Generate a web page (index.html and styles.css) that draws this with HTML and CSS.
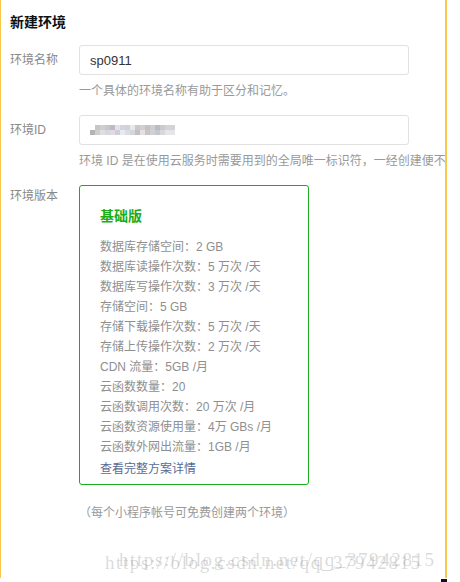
FILE: index.html
```html
<!DOCTYPE html>
<html lang="zh-CN">
<head>
  <meta charset="UTF-8">
  <title>新建环境</title>
  <link rel="stylesheet" href="styles.css">
</head>
<body>
  <div class="panel">
    <h1>新建环境</h1>

    <!-- 环境名称 -->
    <div class="field">
      <label class="label">环境名称</label>
      <input class="input" type="text" value="sp0911">
      <p class="hint">一个具体的环境名称有助于区分和记忆。</p>
    </div>

    <!-- 环境ID -->
    <div class="field">
      <label class="label">环境ID</label>
      <div class="input id-box"><span class="mosaic"></span></div>
      <p class="hint">环境 ID 是在使用云服务时需要用到的全局唯一标识符，一经创建便不</p>
    </div>

    <!-- 环境版本 -->
    <div class="field">
      <label class="label label-top">环境版本</label>
      <div class="plan">
        <h2>基础版</h2>
        <ul>
          <li>数据库存储空间：2 GB</li>
          <li>数据库读操作次数：5 万次 /天</li>
          <li>数据库写操作次数：3 万次 /天</li>
          <li>存储空间：5 GB</li>
          <li>存储下载操作次数：5 万次 /天</li>
          <li>存储上传操作次数：2 万次 /天</li>
          <li>CDN 流量：5GB /月</li>
          <li>云函数数量：20</li>
          <li>云函数调用次数：20 万次 /月</li>
          <li>云函数资源使用量：4万 GBs /月</li>
          <li>云函数外网出流量：1GB /月</li>
        </ul>
        <a class="more" href="#">查看完整方案详情</a>
      </div>
      <p class="note">（每个小程序帐号可免费创建两个环境）</p>
    </div>

    <div class="watermark">https://blog.csdn.net/qq_37942815</div>
  </div>
  <div class="corner"></div>
</body>
</html>
```

FILE: styles.css
```css
body {
  margin: 0;
  background: #fff;
  font-family: "Liberation Sans", "Noto Sans CJK SC", sans-serif;
  font-size: 12px;
  color: #333;
}
.panel {
  position: relative;
  width: 435px;
  height: 578px;
  padding-left: 9px;
  border-left: 1px solid #f8c94c;
  border-right: 2px solid #f8c94c;
  overflow: hidden;
}
h1 {
  margin: 0;
  padding-top: 12px;
  font-size: 14px;
  line-height: 20px;
  font-weight: bold;
  color: #111;
}
.field {
  display: grid;
  grid-template-columns: 69px 330px;
  margin-top: 15px;
}
.field:first-of-type {
  margin-top: 13px;
}
.label {
  color: #888;
  line-height: 30px;
}
.label-top {
  line-height: 22px;
}
.input {
  box-sizing: border-box;
  width: 330px;
  height: 30px;
  padding: 0 10px;
  border: 1px solid #e1e1e1;
  border-radius: 3px;
  font-family: inherit;
  font-size: 13px;
  color: #333;
  outline: none;
}
.id-box {
  display: flex;
  align-items: center;
}
/* 打码的环境ID */
.mosaic {
  display: block;
  width: 85px;
  height: 10px;
  background-image:
    linear-gradient(90deg, #fff 0 5px, #c9c6c9 5px 10px, #cfcfcf 10px 15px, #c5c7cf 15px 20px, #b9bcc6 20px 25px, #e2e2e8 25px 30px, #d7d3dd 30px 35px, #cdd2df 35px 40px, #e8e8ea 40px 45px, #c9c9cb 45px 50px, #d1cfd2 50px 55px, #c4c2c6 55px 60px, #cfcdd0 60px 65px, #b9bbc6 65px 70px, #cacbd0 70px 75px, #d4d4d6 75px 85px),
    linear-gradient(90deg, #b5b3b8 0 5px, #cfcecf 5px 10px, #e0dfe0 10px 15px, #d8d7da 15px 20px, #e6d9e3 20px 25px, #ccd0dc 25px 30px, #e9eaee 30px 35px, #d9dde6 35px 40px, #d6d6d8 40px 45px, #c2c0c3 45px 50px, #e3e1e3 50px 55px, #c7c5c9 55px 60px, #d3d0d4 60px 65px, #c6c8d0 65px 70px, #d8d8da 70px 75px, #e6e6e8 75px 85px);
  background-size: 85px 5px, 85px 5px;
  background-position: 0 0, 0 5px;
  background-repeat: no-repeat;
}
.hint {
  grid-column: 2;
  margin: 8px 0 0;
  line-height: 17px;
  color: #999;
  white-space: nowrap;
}
.plan {
  box-sizing: border-box;
  width: 230px;
  padding: 20px 20px 5px;
  border: 1px solid #1aad19;
  border-radius: 3px;
}
.plan h2 {
  margin: 0 0 11px;
  font-size: 14px;
  line-height: 20px;
  font-weight: bold;
  color: #1aad19;
}
.plan ul {
  margin: 0;
  padding: 0;
  list-style: none;
}
.plan li {
  line-height: 20px;
  color: #8f8f8f;
}
.more {
  display: block;
  margin-top: 2px;
  line-height: 20px;
  color: #576b95;
  text-decoration: none;
}
.note {
  grid-column: 2;
  margin: 20px 0 0;
  line-height: 17px;
  color: #999;
}
/* 水印 */
.watermark {
  position: absolute;
  left: 104px;
  top: 552px;
  font-family: "Liberation Serif", serif;
  font-size: 19px;
  letter-spacing: 1.6px;
  color: rgba(150, 150, 150, 0.35);
  text-shadow: 14px -3px 0 rgba(150, 150, 150, 0.35);
  white-space: nowrap;
}
.corner {
  width: 6px;
  height: 3px;
  margin-left: 441px;
  margin-top: 1px;
  background: #111;
}
```
